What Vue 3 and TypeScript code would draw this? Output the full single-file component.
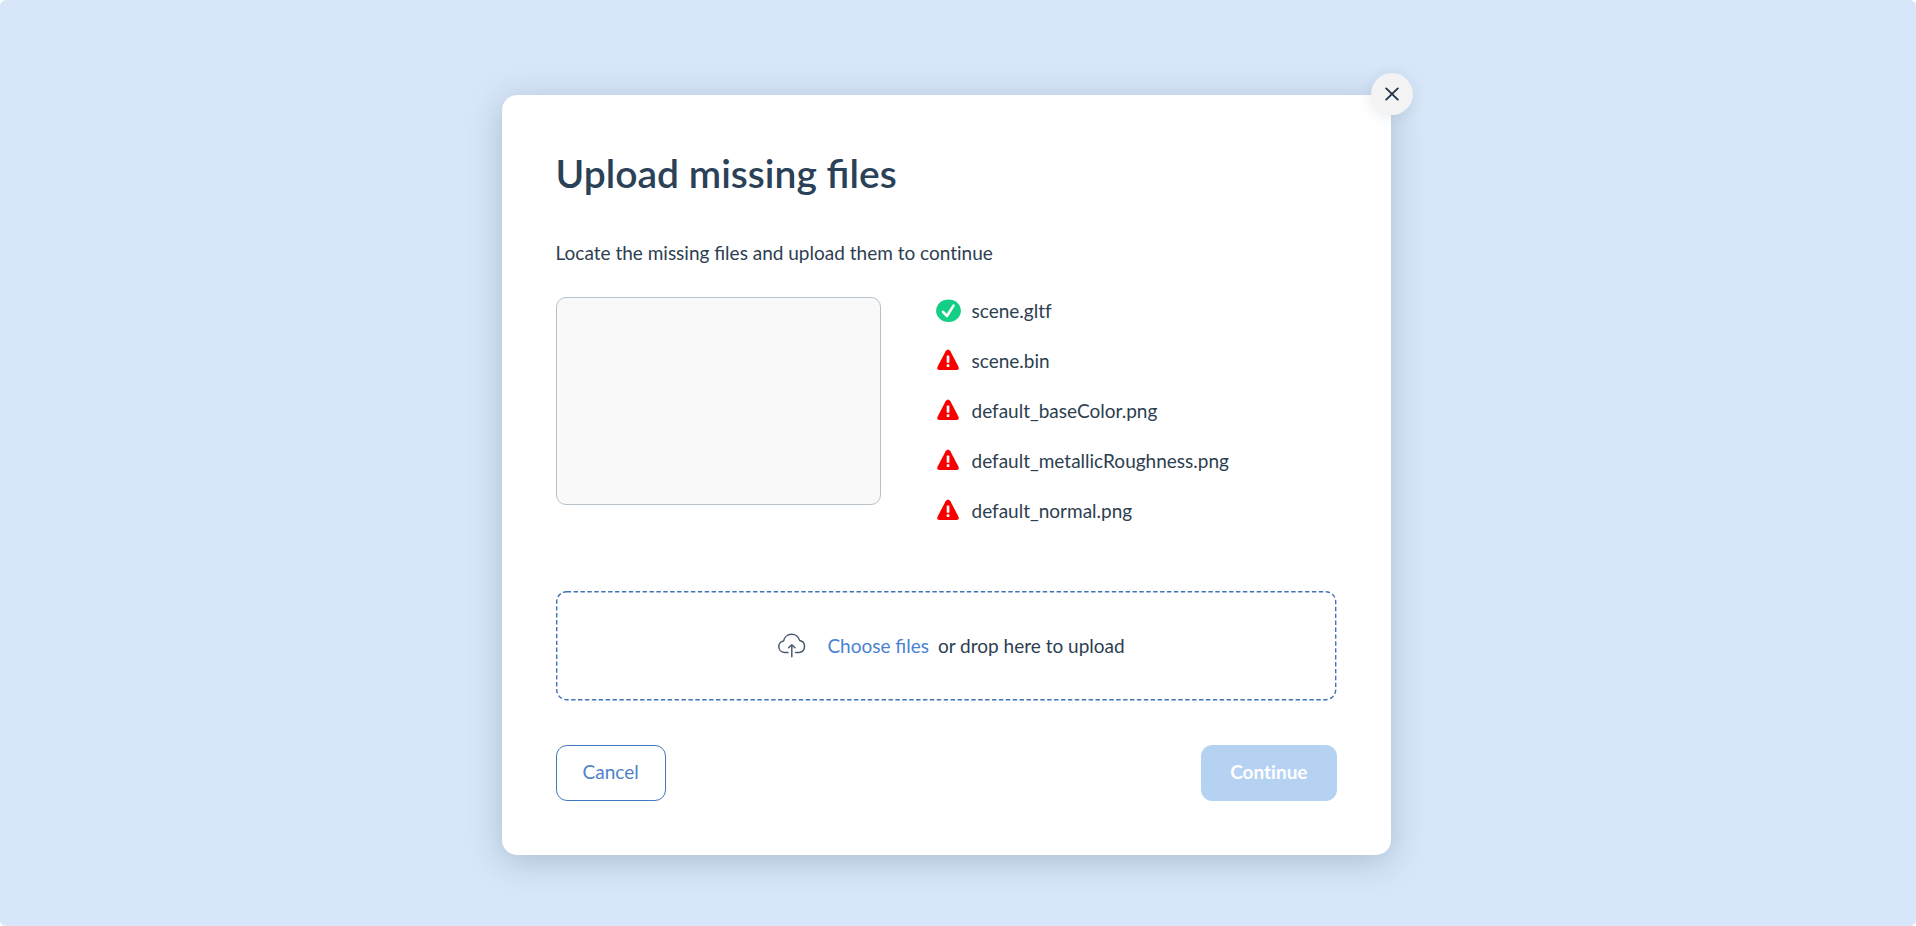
<script setup lang="ts">
import { ref } from 'vue'

interface SceneFile {
  name: string
  found: boolean
}

const files = ref<SceneFile[]>([
  { name: 'scene.gltf', found: true },
  { name: 'scene.bin', found: false },
  { name: 'default_baseColor.png', found: false },
  { name: 'default_metallicRoughness.png', found: false },
  { name: 'default_normal.png', found: false },
])

const picker = ref<HTMLInputElement | null>(null)

function markFound(list: FileList | null | undefined) {
  if (!list) return
  const names = Array.from(list).map((f) => f.name)
  files.value.forEach((f) => {
    if (names.includes(f.name)) f.found = true
  })
}
</script>

<template>
  <main class="page">
    <section class="dialog" role="dialog" aria-labelledby="dialog-title">
      <button class="close" type="button" aria-label="Close">
        <svg width="14" height="14" viewBox="0 0 14 14" aria-hidden="true">
          <path d="M1.2 1.4 L12.8 12.6 M12.8 1.4 L1.2 12.6" />
        </svg>
      </button>

      <h1 id="dialog-title" class="title">Upload missing files</h1>
      <p class="hint">
        Locate the missing files and upload them to <span class="unjoined">continue</span>
      </p>

      <div class="content">
        <div class="preview"></div>
        <ul class="files unjoined">
          <li v-for="file in files" :key="file.name" class="file">
            <svg v-if="file.found" class="status" viewBox="0 0 25 24" aria-hidden="true">
              <ellipse cx="12.5" cy="11.8" rx="12.4" ry="11.3" fill="#12cf85" />
              <path
                d="M7 12.8 L11 17 L17.5 6.6"
                fill="none"
                stroke="#fff"
                stroke-width="2.6"
                stroke-linecap="round"
                stroke-linejoin="round"
              />
            </svg>
            <svg v-else class="status" viewBox="0 0 25 24" aria-hidden="true">
              <path
                d="M9.6 2.2 Q12 -1.2 14.4 2.2 L22.2 17.2 Q23.8 21 20.6 21 L3.4 21 Q0.2 21 1.8 17.2 Z"
                fill="#f80000"
              />
              <rect x="10.7" y="6.4" width="2.7" height="7.4" rx="0.6" fill="#fff" />
              <rect x="10.7" y="15.2" width="2.7" height="2.8" rx="0.6" fill="#fff" />
            </svg>
            <span>{{ file.name }}</span>
          </li>
        </ul>
      </div>

      <div class="dropzone" @dragover.prevent @drop.prevent="markFound($event.dataTransfer?.files)">
        <svg class="outline" aria-hidden="true">
          <rect x="0.7" y="0.7" rx="10" />
        </svg>
        <svg class="cloud" width="30" height="28" viewBox="0 0 30 28" aria-hidden="true">
          <path
            d="M11 20.4 H7.2 A5.8 5.8 0 0 1 6.6 8.9 A8.2 8.2 0 0 1 22.6 8.4 A6.1 6.1 0 0 1 22.4 20.4 H18.6"
          />
          <path d="M14.8 24.8 V13.2 M11.6 15.8 L14.8 12.7 L18 15.8" />
        </svg>
        <p class="drop-text">
          <button class="choose" type="button" @click="picker?.click()">Choose files</button>
          <span>or drop here to upload</span>
        </p>
        <input
          ref="picker"
          type="file"
          multiple
          hidden
          aria-label="Choose files"
          @change="markFound(picker?.files)"
        />
      </div>

      <footer class="actions">
        <button class="btn cancel" type="button">Cancel</button>
        <button class="btn continue unjoined" type="button" disabled>Continue</button>
      </footer>
    </section>
  </main>
</template>

<style>
body {
  background: #fff;
}
</style>

<style scoped>
.page {
  box-sizing: border-box;
  min-height: 100vh;
  padding: 95px 24px 71px 0;
  display: flex;
  justify-content: center;
  align-items: flex-start;
  background: #d7e6f8;
  border-radius: 6px;
  color: #2c3e50;
  font-family: Lato, 'Open Sans', sans-serif;
  font-size: 19px;
  line-height: 24px;
}

.unjoined {
  font-variant-ligatures: none;
}

.dialog {
  position: relative;
  box-sizing: border-box;
  width: 100%;
  max-width: 889px;
  padding: 54px;
  background: #fff;
  border-radius: 15px;
  box-shadow: 0 6px 32px rgba(44, 72, 100, 0.25);
}

.close {
  position: absolute;
  top: -22px;
  right: -22px;
  width: 42px;
  height: 42px;
  padding: 0;
  display: flex;
  align-items: center;
  justify-content: center;
  border: 0;
  border-radius: 50%;
  background: #f3f3f3;
  box-shadow: 0 2px 14px rgba(44, 72, 100, 0.12);
  cursor: pointer;
}

.close path {
  fill: none;
  stroke: #1c3144;
  stroke-width: 1.8;
  stroke-linecap: round;
}

.title {
  margin: 0;
  font-size: 39px;
  line-height: 48px;
  font-weight: 600;
  color: #2a4158;
}

.hint {
  margin: 44px 0 32px;
}

.content {
  display: flex;
  gap: 55px;
}

.preview {
  box-sizing: border-box;
  width: 325px;
  height: 208px;
  background: #f9f9f9;
  border: 1px solid #b6c1c9;
  border-radius: 10px;
}

.files {
  margin: 2px 0 0;
  padding: 0;
  list-style: none;
  display: grid;
  gap: 26px;
}

.file {
  display: flex;
  align-items: center;
  gap: 11px;
}

.status {
  width: 25px;
  height: 24px;
}

.dropzone {
  position: relative;
  box-sizing: border-box;
  min-height: 110px;
  margin-top: 68px;
  padding-left: 10px;
  display: flex;
  align-items: center;
  justify-content: center;
  gap: 20px;
}

.outline {
  position: absolute;
  top: 0;
  left: 0;
  width: 100%;
  height: 100%;
  pointer-events: none;
}

.outline rect {
  width: calc(100% - 2px);
  height: calc(100% - 2px);
  fill: none;
  stroke: #3f74b8;
  stroke-width: 1.4;
  stroke-dasharray: 4.4 2.5;
}

.cloud path {
  fill: none;
  stroke: #4d5c6b;
  stroke-width: 1.5;
  stroke-linecap: round;
  stroke-linejoin: round;
}

.drop-text {
  margin: 0;
  display: flex;
  gap: 9px;
}

.choose {
  padding: 0;
  border: 0;
  background: none;
  color: #4a82d2;
  font: inherit;
  cursor: pointer;
}

.actions {
  margin-top: 44px;
  display: flex;
  justify-content: space-between;
}

.btn {
  box-sizing: border-box;
  height: 56px;
  padding: 0 26px 2px;
  border: 1px solid #4379c0;
  border-radius: 11px;
  font-family: inherit;
  font-size: 19px;
  line-height: 24px;
  cursor: pointer;
}

.cancel {
  background: #fff;
  color: #4f82ca;
}

.continue {
  padding: 0 28px 2px;
  border-color: #b5d2f3;
  background: #b5d2f3;
  color: #fff;
  font-weight: 700;
  cursor: default;
}
</style>
